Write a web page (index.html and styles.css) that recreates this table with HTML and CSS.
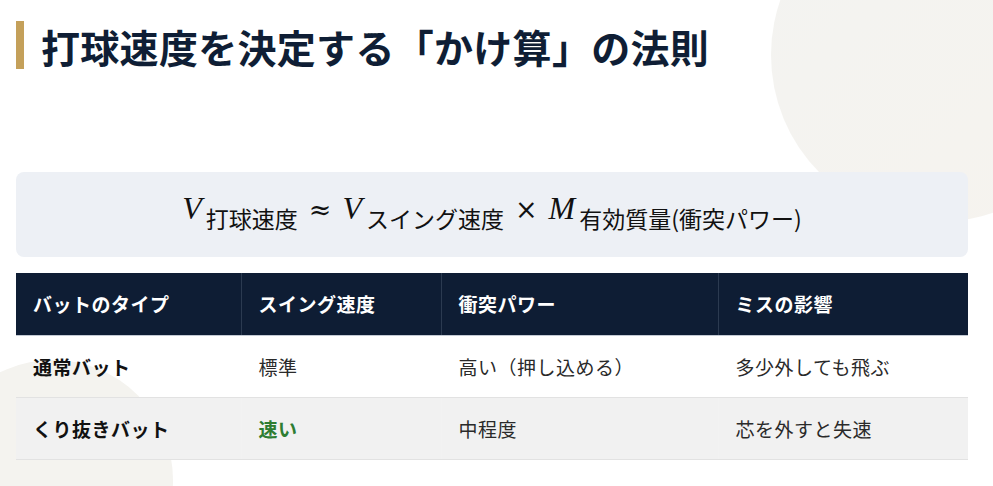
FILE: index.html
```html
<!DOCTYPE html>
<html lang="ja">
<head>
<meta charset="utf-8">
<title>打球速度を決定する「かけ算」の法則</title>
<link rel="stylesheet" href="styles.css">
</head>
<body>
<div class="slide">
  <div class="deco deco-tr"></div>
  <div class="deco deco-bl"></div>
  <h1 class="title">打球速度を決定する「かけ算」の法則</h1>
  <div class="formula">
    <span class="var">V</span><span class="sub">打球速度</span>
    <span class="op op-approx">≈</span>
    <span class="var">V</span><span class="sub">スイング速度</span>
    <span class="op op-times">×</span>
    <span class="var">M</span><span class="sub">有効質量(衝突パワー)</span>
  </div>
  <table class="compare">
    <thead>
      <tr>
        <th class="c1">バットのタイプ</th>
        <th class="c2">スイング速度</th>
        <th class="c3">衝突パワー</th>
        <th class="c4">ミスの影響</th>
      </tr>
    </thead>
    <tbody>
      <tr>
        <td class="name">通常バット</td>
        <td>標準</td>
        <td>高い（押し込める）</td>
        <td>多少外しても飛ぶ</td>
      </tr>
      <tr class="alt">
        <td class="name">くり抜きバット</td>
        <td class="good">速い</td>
        <td>中程度</td>
        <td>芯を外すと失速</td>
      </tr>
    </tbody>
  </table>
</div>
</body>
</html>
```

FILE: styles.css
```css
* { box-sizing: border-box; }
html, body { margin: 0; padding: 0; background: #ffffff; }
body {
  font-family: "Noto Sans CJK JP", "Noto Sans", sans-serif;
  color: #1a1a1a;
}
.slide {
  position: relative;
  width: 993px;
  height: 486px;
  overflow: hidden;
  padding: 21px 25px 0 16px;
}
.deco {
  position: absolute;
  border-radius: 50%;
  z-index: 0;
}
.deco-tr {
  left: 771px;
  top: -112px;
  width: 334px;
  height: 334px;
  background: linear-gradient(135deg, #f3f3f1 0%, #f6f3ee 100%);
}
.deco-bl {
  left: -67px;
  top: 360px;
  width: 240px;
  height: 240px;
  background: #f4f3ef;
}
.title {
  position: relative;
  z-index: 1;
  margin: 0;
  height: 48px;
  border-left: 8px solid #c4a05a;
  padding-left: 17px;
  font-size: 39px;
  line-height: 50px;
  font-weight: 700;
  color: #0f1e35;
  letter-spacing: 0.3px;
  white-space: nowrap;
}
.formula {
  position: relative;
  z-index: 1;
  margin-top: 103px;
  height: 85px;
  background: #edf0f5;
  border-radius: 8px;
  display: flex;
  align-items: baseline;
  justify-content: center;
  padding-top: 16px;
  color: #111111;
}
.var {
  font-family: "Liberation Serif", serif;
  font-style: italic;
  font-size: 32px;
  line-height: 40px;
}
.sub {
  font-family: "Noto Sans CJK JP", sans-serif;
  font-size: 23px;
  position: relative;
  top: 9px;
  margin-left: 4px;
  letter-spacing: 0;
}
.op {
  font-family: "DejaVu Serif", serif;
  font-size: 27px;
  margin: 0 11px;
}
.compare {
  position: relative;
  z-index: 1;
  margin-top: 16px;
  width: 952px;
  border-collapse: collapse;
  table-layout: fixed;
}
.compare th, .compare td {
  text-align: left;
  padding: 0 17px;
  font-size: 19px;
  letter-spacing: 0.5px;
  border-right: 1px solid rgba(255, 255, 255, 0.12);
}
.compare th:last-child, .compare td:last-child { border-right: none; }
.compare thead th {
  background: #0e1d34;
  color: #ffffff;
  font-weight: 700;
  height: 62px;
  border-bottom: 1px solid #c3cad4;
  border-right-color: #2b3a50;
}
.compare .c1 { width: 225px; }
.compare .c2 { width: 200px; }
.compare .c3 { width: 277px; }
.compare .c4 { width: 250px; }
.compare tbody td {
  height: 62px;
  color: #2a2a2a;
  border-bottom: 1px solid #e2e2e2;
}
.compare tbody tr.alt td { background: #f1f1f1; }
.compare td.name { font-weight: 700; color: #111111; }
.compare td.good { font-weight: 700; color: #2e7d32; }
```
